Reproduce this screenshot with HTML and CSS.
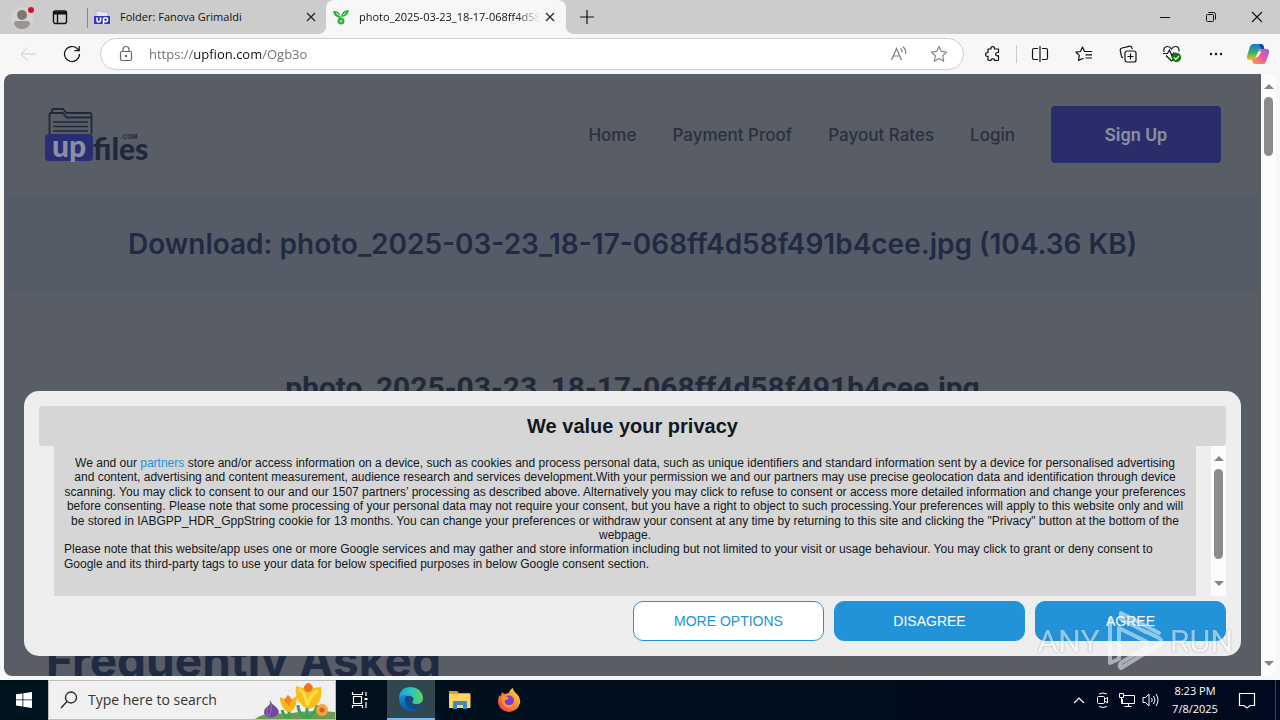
FILE: index.html
```html
<!doctype html>
<html lang="en"><head>
<meta charset="UTF-8">
<meta name="viewport" content="width=device-width">
<title>Download: photo_2025-03-23_18-17-068ff4d58f491b4cee.jpg</title>
<link rel="stylesheet" href="styles.css"></head><body>

<div class="tabbar">
	<button class="ico avatar" aria-label="Profile"><svg width="24" height="24" viewBox="0 0 24 24"><circle cx="12" cy="13" r="11" fill="#d6d4d2"/><circle cx="12" cy="10" r="5" fill="#7d7873"/><path d="M4 19q0-3 3-3h10q3 0 3 3q-2 5-8 5t-8-5z" fill="#989490"/><circle cx="21" cy="5" r="3" fill="#d4112a"/></svg></button>
	<button class="ico acts" aria-label="Tab actions"><svg width="16" height="16" viewBox="0 0 16 16" fill="none" stroke="#111" stroke-width="1.4"><rect x="1.5" y="2" width="13" height="12.5" rx="2"/><path d="M1.5 4h13" stroke-width="3"/><path d="M5.5 5v9"/></svg></button>
	<div class="tab first">
		<svg width="16" height="16" viewBox="0 0 16 16"><path d="M2 8V2h5l1 1h6v5" fill="#e6e6ef" stroke="#b8b8c4"/><path d="M0 7h16v8H0z" fill="#3437bd"/><path d="M3 8.500v3q0 1.500 1.500 1.500T6.500 11.500v-3M9.500 15V8.800M9.500 10.800q0-2 2-2t2 2t-2 2t-2-2" fill="none" stroke="#fff" stroke-width="1.500"/></svg>
		<a href="#folder">Folder: Fanova Grimaldi</a>
		<button class="close" aria-label="Close tab"><svg width="10" height="10" viewBox="0 0 10 10"><path d="M1 1l8 8M9 1l-8 8" stroke="#222" stroke-width="1.2"/></svg></button>
	</div>
	<div class="tab on">
		<svg width="16" height="16" viewBox="0 0 16 16"><path d="M0 2q7-1 8 7q-7 0-8-7zM16 1q-7 0-8 7q7 0 8-7z" fill="#2fae3e"/><path d="M3 4l4 3M13 3.500L10 6" stroke="#d9f2d9"/><circle cx="8" cy="12" r="2.500" fill="#8fd797" stroke="#2fae3e" stroke-width="2"/></svg>
		<a href="#photo" class="fade">photo_2025-03-23_18-17-068ff4d58f491b4cee</a>
		<button class="close" aria-label="Close tab"><svg width="10" height="10" viewBox="0 0 10 10"><path d="M1 1l8 8M9 1l-8 8" stroke="#222" stroke-width="1.2"/></svg></button>
	</div>
	<button class="ico plus" aria-label="New tab"><svg width="14" height="14" viewBox="0 0 14 14"><path d="M7 0v14M0 7h14" stroke="#111" stroke-width="1.2"/></svg></button>
	<div class="auto"></div>
	<button class="ico win" aria-label="Minimize"><svg width="10" height="10" viewBox="0 0 10 10"><path d="M0 5.500h10" stroke="#111"/></svg></button>
	<button class="ico win" aria-label="Restore"><svg width="10" height="10" viewBox="0 0 10 10" fill="none" stroke="#111"><rect x=".5" y="2.500" width="7" height="7" rx="1"/><path d="M2.500 .5h5q2 0 2 2v5"/></svg></button>
	<button class="ico win" aria-label="Close"><svg width="12" height="12" viewBox="0 0 12 12"><path d="M1 1l10 10M11 1L1 11" stroke="#111" stroke-width="1.100"/></svg></button>
</div>

<div class="toolbar">
	<button class="ico tool" aria-label="Back"><svg width="16" height="16" viewBox="0 0 16 16"><path d="M16 8H1M7.500 1.500L1 8l6.500 6.500" fill="none" stroke="#cdcdcd"/></svg></button>
	<button class="ico tool" aria-label="Refresh"><svg width="18" height="18" viewBox="0 0 18 18" fill="none" stroke="#111" stroke-width="1.200"><path d="M16.500 9a7.500 7.500 0 1 1-2.200-5.300L16 5.500M16.200 1v4.700h-4.700"/></svg></button>
	<div class="address">
		<svg width="14" height="18" viewBox="0 0 14 18" fill="none" stroke="#666" stroke-width="1.200"><rect x="1.500" y="6.500" width="11" height="9" rx="1.500"/><path d="M4 6.500V4.500a3 3 0 0 1 6 0v2"/><circle cx="7" cy="11" r=".6" fill="#666"/></svg>
		<input class="url" type="text" aria-label="Address" value="https://upfion.com/Ogb3o">
		<button class="ico in" aria-label="Read aloud"><svg width="18" height="16" viewBox="0 0 18 16" fill="none" stroke="#7a7a7a" stroke-width="1.200"><path d="M1.500 14L6.500 2.500L11.500 14M3.200 10h6.600M10.500 2.500q2 1.500 1.500 4M13 .8q3.500 3 2.500 7"/></svg></button>
		<button class="ico in" aria-label="Favorite"><svg width="18" height="18" viewBox="0 0 18 18" fill="none" stroke="#888" stroke-width="1.200" stroke-linejoin="round"><path d="M9 1.500l2.300 4.900l5.400.7l-4 3.700l1 5.300L9 13.500l-4.700 2.600l1-5.300l-4-3.700l5.400-.7z"/></svg></button>
	</div>
	<button class="ico tool" aria-label="Extensions"><svg width="16" height="16" viewBox="0 0 16 16" fill="none" stroke="#111" stroke-width="1.200" stroke-linejoin="round"><path d="M3 3h3q-.5-2.400 1.700-2.400T9.500 3h4v3.500h-1.300q-1.600.3-1.600 1.700t1.600 1.700h1.300v3.600q0 1-1 1H9.700q.3-1.600-1.900-1.600T6 14.500H4q-1 0-1-1v-3.200q-2.400.5-2.400-1.700T3 6.500z"/></svg></button>
	<span class="sep"></span>
	<button class="ico tool" aria-label="Split screen"><svg width="18" height="16" viewBox="0 0 18 16" fill="none" stroke="#111" stroke-width="1.200"><path d="M7 2.500H3q-1.500 0-1.500 1.500v8q0 1.500 1.500 1.500h4M11 2.500h4q1.500 0 1.500 1.500v8q0 1.500-1.500 1.500h-4M9 0v16"/></svg></button>
	<button class="ico tool" aria-label="Favorites"><svg width="18" height="16" viewBox="0 0 18 16" fill="none" stroke="#111" stroke-width="1.200" stroke-linejoin="round"><path d="M11 5.500H9.600L7.500 1L5.500 5.500l-4.500.7l3.300 3.200L3.500 14.500l4-2l1 .5M11 5.500h6M10.500 8.800H17M10.500 12H17"/></svg></button>
	<button class="ico tool" aria-label="Collections"><svg width="18" height="18" viewBox="0 0 18 18" fill="none" stroke="#111" stroke-width="1.200"><rect x="6" y="6" width="11" height="11" rx="2"/><path d="M11.500 8.500v6M8.500 11.500h6M4 13Q2.800 12.500 2.400 11L1.200 5.500Q1 3.500 3 3L10 1.300q2.300-.5 3 1.800L13.300 4"/></svg></button>
	<button class="ico tool" aria-label="Browser essentials"><svg width="20" height="18" viewBox="0 0 20 18" fill="none" stroke="#111" stroke-width="1.200"><path d="M2 7Q1 2 5 1.500Q8 1.300 9.500 4Q11 1.300 14 1.500Q17.500 2 17 6.500M4 10.500l5.500 5.500l1.500-1.500M1 8.500h4.500l2-3.500l2.500 6l1.500-3h2"/><circle cx="14.500" cy="12.500" r="4.700" fill="#107c10" stroke="none"/><path d="M12 12.500l1.800 1.800l3.200-3.300" stroke="#fff"/></svg></button>
	<button class="ico tool" aria-label="Settings and more"><svg width="14" height="4" viewBox="0 0 14 4" fill="#111"><circle cx="2" cy="2" r="1.200"/><circle cx="7" cy="2" r="1.200"/><circle cx="12" cy="2" r="1.200"/></svg></button>
	<button class="ico copilot" aria-label="Copilot"><svg width="24" height="22" viewBox="0 0 24 22"><defs><linearGradient id="ca" x1="0" y1="0" x2="0" y2="1"><stop offset="0" stop-color="#1578e0"/><stop offset=".5" stop-color="#36a86c"/><stop offset="1" stop-color="#f2c21a"/></linearGradient><linearGradient id="cb" x1="1" y1="0" x2="0" y2="1"><stop offset="0" stop-color="#9b5ce6"/><stop offset=".5" stop-color="#ee5c93"/><stop offset="1" stop-color="#ff9a4a"/></linearGradient></defs><path d="M7 1h8q2 0 2.600 2L18 6h-3q-2 0-2.700 2l-2 6.500Q9.500 17 7 17H4Q0 17 1 13L4 3.500Q5 1 7 1z" fill="url(#ca)"/><path d="M13 1h2q2 0 2.600 2l1 3.500h-3Q14 5 13 1z" fill="#173fb8"/><path d="M17 21H9q-2 0-2.500-2L6 16h2q2 0 2.800-2l2-6q.8-2 3.200-2h4q4 0 3 4l-3 8.500q-1 2.500-3 2.500z" fill="url(#cb)"/><path d="M13 8.500h2.500L12 14H9.500z" fill="#f7f7f7"/></svg></button>
</div>

<div class="view">
	<div class="page">
		<header class="head">
			<a class="logo" href="#home" aria-label="upfiles.com">
				<svg class="folder" width="46" height="26" viewBox="0 0 46 26" fill="none" stroke="#20283a" stroke-width="1.800"><path d="M1.500 26V6.500Q1.500 5 3 5h12l3.500 4.500H42q1.500 0 1.500 1.500v15M4 5V2.500Q4 1 5.500 1H15l3.500 4H42q1.500 0 1.500 1.500V12"/><path d="M5 14h35M5 18.500h35M5 23h35" stroke-width="1.500"/></svg>
				<span class="word"><b class="up">up</b><b class="files">files</b><i>.COM</i></span>
			</a>
			<nav class="menu">
				<a href="#home">Home</a>
				<a href="#proof">Payment Proof</a>
				<a href="#rates">Payout Rates</a>
				<a href="#login">Login</a>
				<a href="#signup" class="signup">Sign Up</a>
			</nav>
		</header>
		<h1>Download: photo_2025-03-23_18-17-068ff4d58f491b4cee.jpg (104.36 KB)</h1>
		<h2>photo_2025-03-23_18-17-068ff4d58f491b4cee.jpg</h2>
		<h2 class="faq">Frequently Asked</h2>
	</div>
	<div class="bar"><i class="up-arrow"></i><span class="thumb"></span><i class="down-arrow"></i></div>

	<div class="consent" role="dialog" aria-labelledby="ctitle">
		<h3 id="ctitle">We value your privacy</h3>
		<div class="scroll">
			<div class="text">
				<p class="tc">We and our <a href="#partners">partners</a> store and/or access information on a device, such as cookies and process personal data, such as unique identifiers and standard information sent by a device for personalised advertising and content, advertising and content measurement, audience research and services development.With your permission we and our partners may use precise geolocation data and identification through device scanning. You may click to consent to our and our 1507 partners’ processing as described above. Alternatively you may click to refuse to consent or access more detailed information and change your preferences before consenting. Please note that some processing of your personal data may not require your consent, but you have a right to object to such processing.Your preferences will apply to this website only and will be stored in IABGPP_HDR_GppString cookie for 13 months. You can change your preferences or withdraw your consent at any time by returning to this site and clicking the "Privacy" button at the bottom of the webpage.</p>
				<p>Please note that this website/app uses one or more Google services and may gather and store information including but not limited to your visit or usage behaviour. You may click to grant or deny consent to Google and its third-party tags to use your data for below specified purposes in below Google consent section.</p>
			</div>
			<div class="bar"><i class="up-arrow"></i><span class="thumb long"></span><i class="down-arrow"></i></div>
		</div>
		<div class="btns">
			<button class="btn line">MORE OPTIONS</button>
			<button class="btn">DISAGREE</button>
			<button class="btn">AGREE</button>
		</div>
	</div>
</div>

<div class="taskbar">
	<button class="ico task" aria-label="Start"><svg width="16" height="16" viewBox="0 0 16 16" fill="#fff"><path d="M0 2.300l6.500-.9v6.100H0zM7.300 1.300L16 0v7.500H7.300zM0 8.300h6.500v6.100L0 13.500zM7.300 8.300H16V16l-8.700-1.300z"/></svg></button>
	<label class="find">
		<svg width="18" height="18" viewBox="0 0 18 18" fill="none" stroke="#222" stroke-width="1.300"><circle cx="11" cy="6.500" r="5.500"/><path d="M7 10.500L1 17"/></svg>
		<input type="text" placeholder="Type here to search" aria-label="Type here to search">
		<svg class="bloom" width="80" height="38" viewBox="0 0 80 38"><path d="M0 38Q10 30 30 33Q55 28 80 31v7z" fill="#6e9a54"/><path d="M15 18q1 5 5 7q7 6 1 10q-6 3-11-1q-3-5 3-9q3-2 2-7z" fill="#70489f"/><path d="M15 20q3 8-1 15M13 26q-3 5 0 9" stroke="#9673bd" fill="none"/><path d="M34 38V28M34 37q-6-3-7-8M52 38V22M53 37q8-5 9-13M50 37q-7-5-7-13" stroke="#3ba352" stroke-width="3" fill="none"/><path d="M25 16l5 2l3-4l4 4l5-3q0 9-4 14q-4 4-8 0q-5-5-5-13z" fill="#f8b619"/><path d="M29 19l4-5l4 5l-3 6z" fill="#ef8618"/><path d="M41 5l7 2l5-5l5 5l8-1q2 12-5 19q-7 5-13 0q-9-7-7-20z" fill="#f9bd1c"/><path d="M44 8q7 4 8 16q4-11 11-14" stroke="#ffdf54" stroke-width="3" fill="none"/><path d="M49 6q4-8 9 0q-1 5-5 5t-4-5z" fill="#e97420"/><circle cx="67" cy="29" r="6" fill="#f5a33c"/><circle cx="67" cy="29" r="2.500" fill="#d35e1b"/></svg>
	</label>
	<button class="ico task" aria-label="Task view"><svg width="18" height="18" viewBox="0 0 18 18" fill="none" stroke="#fff" stroke-width="1.200"><path d="M1.500 1v2.500h10V1M1.500 17v-2.500h10V17M2.500 5.500h8v7h-8zM15 1v4M15 11v6"/><path d="M13.500 7h3v2h-3z" fill="#fff" stroke="none"/></svg></button>
	<button class="ico task active" aria-label="Edge"><svg width="26" height="26" viewBox="0 0 26 26"><defs><linearGradient id="ea" x1="0" y1="0" x2="1" y2="0"><stop offset="0" stop-color="#1ba6df"/><stop offset=".55" stop-color="#2fc5c0"/><stop offset="1" stop-color="#63d657"/></linearGradient><linearGradient id="eb" x1="0" y1="0" x2="0" y2="1"><stop offset="0" stop-color="#1191dc"/><stop offset="1" stop-color="#0b55ad"/></linearGradient></defs><path d="M1 12Q2 1 13 1q11 1 12 11q0 6-7 6q-5 0-3-3q2-4-3-5Q6 9 1 12z" fill="url(#ea)"/><path d="M1 12q3-4 8-3q-3 3-2 7q2 7 9 7q4 0 7-3q-4 6-11 5Q1 23 1 12z" fill="url(#eb)"/><path d="M11 9.500q-5 3-3 8q2 6 9 6q4 0 7-4q-4 2-8 .5q-6-3-2-7.500q0-2-3-3z" fill="#0e4b91"/></svg></button>
	<button class="ico task wide" aria-label="File Explorer"><svg width="22" height="20" viewBox="0 0 22 20"><path d="M0 1h8l2 2h11v5H0z" fill="#e69b24"/><path d="M0 4h21.500v14H0z" fill="#fcd462"/><path d="M4 19v-7q0-1 1-1h12q1 0 1 1v7h-4v-4H8v4z" fill="#3c8bc4"/></svg></button>
	<button class="ico task wide" aria-label="Firefox"><svg width="24" height="24" viewBox="0 0 24 24"><defs><linearGradient id="ff" x1="1" y1="0" x2="0" y2="1"><stop offset="0" stop-color="#ffe84a"/><stop offset=".45" stop-color="#ff8e27"/><stop offset="1" stop-color="#f22660"/></linearGradient></defs><path d="M5 4q1 2 3 2q3-1 4-1q1-4 4-5q0 3 4 6q4 4 3 9q-2 8-11 9Q2 23 1 14q0-5 2-7q0 1 1 1z" fill="url(#ff)"/><circle cx="12" cy="12.500" r="5" fill="#7541d7"/><path d="M5 9q4-2 7 1q-1 2-4 2q-1 3 2 5q4 1 7-2q-2 6-8 4q-6-3-4-10z" fill="#ff9a24"/></svg></button>
	<div class="auto"></div>
	<button class="ico tray" aria-label="Show hidden icons"><svg width="12" height="8" viewBox="0 0 12 8"><path d="M1 7l5-5l5 5" fill="none" stroke="#fff" stroke-width="1.200"/></svg></button>
	<button class="ico tray" aria-label="Meet now"><svg width="14" height="16" viewBox="0 0 14 16" fill="none" stroke="#fff"><rect x="1.500" y="4.500" width="7" height="7" rx="1"/><path d="M8.500 7.500l3-2v5.500l-3-2M3 2q4-2 8 0M3 14.500q4 2 8 0"/></svg></button>
	<button class="ico tray" aria-label="Network"><svg width="18" height="16" viewBox="0 0 18 16" fill="none" stroke="#fff"><path d="M5 3.500h11.500v8H4.500V7M10.500 11.500v3M6.500 14.500h7M1.500 1.500h4v4h-4zM3.500 5.500v6H5"/></svg></button>
	<button class="ico tray" aria-label="Volume"><svg width="18" height="16" viewBox="0 0 18 16" fill="none" stroke="#fff"><path d="M1 5.500h2.500L7 2v12L3.500 10.500H1zM9.500 6q1.500 2 0 4M11.500 4q3 4 0 8M14 2q4 6 0 12"/></svg></button>
	<div class="clock"><span>8:23 PM</span><span>7/8/2025</span></div>
	<button class="ico note" aria-label="Notifications"><svg width="18" height="17" viewBox="0 0 18 17"><path d="M1.500 1.500h15v12H12L9 16L6 13.500H1.500z" fill="none" stroke="#fff" stroke-width="1.200"/></svg></button>
</div>

<div class="mark"><span>ANY</span><svg width="56" height="62" viewBox="0 0 56 62" fill="none" stroke="#fff" stroke-width="4" stroke-linejoin="round" stroke-linecap="round"><path d="M3 9v44l9-4V18l28 14M14 3l38 20M14 3v6l25 13M14 58l39-24q3-3-1-6L40 22M14 58q-3-3 1-6l25-15"/></svg><span>RUN</span></div>
</body></html>
```
FILE: styles.css
```css
*{ box-sizing: border-box }
body{ margin: 0; height: 100vh; display: flex; flex-direction: column; overflow: hidden; background: #f7f7f7; font: 11px/16px "Open Sans","Noto Sans",sans-serif; color: #111 }
h1, h2, h3, p{ margin: 0 }
a{ color: inherit; text-decoration: none }
button{ border: none; background: none; padding: 0; font: inherit; color: inherit }
input{ border: none; outline: none; background: none; padding: 0; min-width: 0; font: inherit }
svg{ flex: none; display: block }
.auto{ flex: 1 }
.tc{ text-align: center }
.ico{ display: flex; align-items: center; justify-content: center; flex: none }

/* tabs */
.tabbar{ display: flex; align-items: center; height: 34px; background: #ccc }
.avatar{ width: 44px }
.acts{ width: 32px; margin-right: 11px }
.tab{ display: flex; align-items: center; gap: 10px; height: 34px; position: relative }
.tab a{ flex: 1; min-width: 0; overflow: hidden; white-space: nowrap }
.tab .close{ width: 20px; height: 20px; display: flex; align-items: center; justify-content: center; margin-left: -10px }
.first{ width: 239px; padding: 0 5px 0 7px }
.first:before{ content: ''; position: absolute; left: 0; top: 8px; width: 1px; height: 20px; background: #888 }
.on{ width: 240px; padding: 0 6px 0 7px; background: #f7f7f7; border-radius: 8px 8px 0 0 }
.on:before, .on:after{ content: ''; position: absolute; bottom: 0; width: 8px; height: 8px }
.on:before{ left: -8px; background: radial-gradient(circle at 0 0, transparent 8px, #f7f7f7 8px) }
.on:after{ right: -8px; background: radial-gradient(circle at 100% 0, transparent 8px, #f7f7f7 8px) }
.fade{ -webkit-mask-image: linear-gradient(to left, transparent, #000 24px); mask-image: linear-gradient(to left, transparent, #000 24px) }
.plus{ width: 42px }
.win{ width: 46px; height: 34px }

/* toolbar */
.toolbar{ display: flex; align-items: center; height: 40px; padding: 0 2px 0 6px }
.tool{ width: 44px; height: 32px }
.address{ flex: 1; display: flex; align-items: center; height: 32px; margin: 0 7px 0 6px; padding: 0 4px 0 18px; background: #fff; border: 1px solid #d0d0d0; border-radius: 16px }
.url{ flex: 1; height: 20px; margin-left: 16px; font-size: 13px; background: linear-gradient(to right, #6d6d6d 44px, #111 44px, #111 112px, #6d6d6d 112px); -webkit-background-clip: text; background-clip: text; -webkit-text-fill-color: transparent }
.in{ width: 40px }
.sep{ width: 1px; height: 18px; margin: 0 1px; background: #ccc }
.copilot{ width: 40px }

/* page */
.view{ flex: 1; min-height: 0; display: flex; position: relative; margin: 0 4px 4px; border-radius: 8px; overflow: hidden; background: #fff }
.page{ flex: 1; overflow: hidden; background: #585d66; color: #272f3e; font-family: Inter,sans-serif }
.head{ display: flex; align-items: center; justify-content: space-between; height: 122px; padding: 0 40px 0 41px; border-bottom: 1px solid #535967 }
.logo{ color: #20283a }
.logo .folder{ margin-left: 3px }
.word{ display: flex; position: relative; font: 700 30px/28px Lato,sans-serif }
.up{ width: 48px; height: 27px; background: #292d73; color: #8b90a0; border-radius: 4px; text-align: center; line-height: 22px; font-size: 30px }
.files{ font-weight: 900 }
.word i{ position: absolute; right: 11px; top: -1px; font: 700 6px/8px Inter,sans-serif }
.menu{ display: flex; align-items: center; gap: 36px; font-size: 17px; font-weight: 500; color: #2a303d }
.signup{ width: 170px; padding: 16px 0; line-height: 25px; text-align: center; font-family: Roboto,sans-serif; font-size: 18px; font-weight: 600; color: #8b8ea2; background: #292d69; border-radius: 4px }
h1{ padding: 28px 0 27px; font-size: 28px; line-height: 40px; font-weight: 600; text-align: center; color: #202b43; background: #565b68; border-bottom: 1px solid #555a67 }
h2{ padding-top: 76px; font: 700 30px/40px Roboto,sans-serif; text-align: center; color: #222a38 }
.page .faq{ padding: 222px 0 0 42px; font: 700 46px/60px Inter,sans-serif; text-align: left; color: #202b43 }

/* scrollbars */
.bar{ width: 15px; flex: none; display: flex; flex-direction: column; align-items: center; padding: 10px 0; background: #fcfcfc }
.up-arrow, .down-arrow{ border: 5px solid transparent }
.up-arrow{ border-top: none; border-bottom-color: #858585 }
.down-arrow{ border-bottom: none; border-top-color: #858585; margin-top: auto }
.thumb{ width: 9px; height: 59px; margin-top: 8px; border-radius: 5px; background: #8b8b8b }
.long{ height: 90px }

/* consent dialog */
.consent{ position: absolute; left: 20px; right: 35px; bottom: 20px; padding: 15px; border-radius: 15px; background: #eee; font-family: "Liberation Sans",Arial,sans-serif; color: #111820 }
.consent h3{ font-size: 20px; line-height: 40px; text-align: center; background: #d6d6d6; border-radius: 4px }
.scroll{ display: flex; height: 150px; margin-left: 15px; overflow: hidden }
.text{ flex: 1; margin-right: 15px; padding: 10px; background: #d6d6d6; font-size: 12px; line-height: 1.2 }
.text a{ color: #2293d8 }
.btns{ display: flex; justify-content: flex-end; gap: 10px; padding-top: 5px }
.btn{ width: 191px; height: 40px; border: 1px solid #2293d8; border-radius: 10px; background: #2293d8; color: #fff; font-size: 14px }
.line{ background: #fff; color: #2293d8 }

/* taskbar */
.taskbar{ display: flex; height: 40px; background: linear-gradient(to right, #00141d, #000a1e); color: #fff }
.task{ width: 48px }
.wide{ width: 49px }
.active{ margin-left: 3px; background: #31474f; border-bottom: 2px solid #76b9ed }
.find{ display: flex; align-items: center; width: 288px; padding-left: 11px; background: #f0f0f0; border: 1px solid #bbb }
.find input{ flex: 1; margin-left: 10px; font-size: 14px; line-height: 20px }
.find input::placeholder{ color: #333; opacity: 1 }
.tray{ width: 24px }
.clock{ width: 64px; display: flex; flex-direction: column; align-items: center; justify-content: center; line-height: 18px }
.note{ width: 49px; margin-right: 4px; padding-right: 8px; border-right: 1px solid #3b4456 }

/* watermark over the corner of the screen */
.mark{ position: absolute; right: 47px; bottom: 48px; display: flex; align-items: center; gap: 7px; opacity: .5; color: #fff; font: 32px/40px Roboto,sans-serif; text-shadow: 0 0 2px #555; pointer-events: none }
```
